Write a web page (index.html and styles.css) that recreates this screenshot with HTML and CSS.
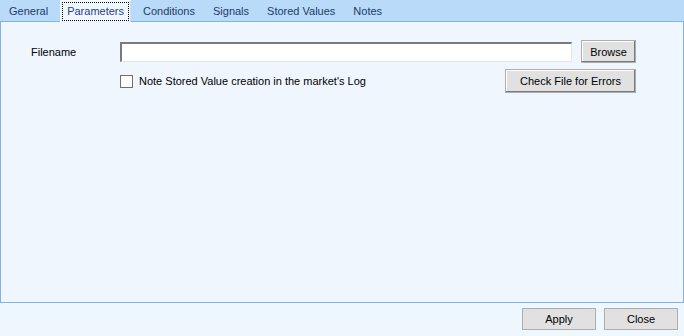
FILE: index.html
```html
<!DOCTYPE html>
<html>
<head>
<meta charset="utf-8">
<link rel="stylesheet" href="styles.css">
</head>
<body>
<div class="window">
  <div class="tabstrip">
    <div class="tab">General</div>
    <div class="tab active"><span class="focus">Parameters</span></div>
    <div class="tab">Conditions</div>
    <div class="tab">Signals</div>
    <div class="tab">Stored Values</div>
    <div class="tab">Notes</div>
  </div>
  <div class="panel">
    <div class="row1">
      <div class="label">Filename</div>
      <div class="textbox"></div>
      <div class="btn browse">Browse</div>
    </div>
    <div class="row2">
      <div class="check"><span class="box"></span><span>Note Stored Value creation in the market's Log</span></div>
      <div class="btn checkfile">Check File for Errors</div>
    </div>
  </div>
  <div class="footer">
    <div class="btn foot">Apply</div>
    <div class="btn foot">Close</div>
  </div>
</div>
</body>
</html>
```
FILE: styles.css
```css
html, body {
  margin: 0;
  padding: 0;
}
body {
  width: 684px;
  height: 336px;
  background: #eef6fe;
  font-family: "Liberation Sans", Arial, sans-serif;
  font-size: 11px;
  color: #000;
  overflow: hidden;
}
.window {
  display: flex;
  flex-direction: column;
  height: 336px;
}
.tabstrip {
  height: 21px;
  background: #b9daf8;
  display: flex;
  align-items: flex-end;
  padding-left: 3px;
  gap: 6px;
  position: relative;
  z-index: 1;
}
.tab {
  height: 20px;
  line-height: 20px;
  padding: 0 6px;
  color: #1d3a6a;
  box-sizing: border-box;
}
.tab.active {
  height: 22px;
  margin-bottom: -1px;
  background: #eff7fe;
  border: 1px solid #f6fbff;
  border-bottom: none;
  border-right-color: #c7dcf3;
  padding: 1px 1px 0;
  line-height: 17px;
  color: #2a3f8a;
}
.tab.active .focus {
  display: block;
  border: 1px dotted #000;
  padding: 0 4px;
  height: 17px;
  line-height: 17px;
}
.panel {
  height: 282px;
  box-sizing: border-box;
  border: 1px solid #7eb4ea;
  background: #eff6fe;
  padding: 18px 47px 0 30px;
}
.row1 {
  display: flex;
  align-items: center;
  height: 23px;
}
.label {
  width: 89px;
}
.textbox {
  width: 453px;
  height: 20px;
  box-sizing: border-box;
  background: #fff;
  border-top: 2px solid #7a7a7a;
  border-left: 2px solid #7a7a7a;
  border-right: 1px solid #e6e6e6;
  border-bottom: 1px solid #e6e6e6;
}
.btn {
  box-sizing: border-box;
  background: #e1e1e1;
  border: 1px solid #adadad;
  box-shadow: inset -1px -1px 0 #7a7a7a, inset 1px 1px 0 #fff;
  display: flex;
  align-items: center;
  justify-content: center;
  color: #000;
}
.browse {
  margin-left: 9px;
  width: 55px;
  height: 23px;
}
.row2 {
  display: flex;
  align-items: center;
  margin-top: 6px;
  margin-left: 89px;
  height: 24px;
}
.check {
  display: flex;
  align-items: center;
  gap: 6px;
}
.box {
  width: 13px;
  height: 13px;
  box-sizing: border-box;
  background: #fff;
  border: 1px solid #707070;
}
.checkfile {
  margin-left: auto;
  width: 131px;
  height: 24px;
}
.footer {
  display: flex;
  justify-content: flex-end;
  gap: 8px;
  padding: 5px 6px 0 0;
}
.foot {
  width: 74px;
  height: 22px;
  border-color: #adadad;
  box-shadow: none;
}
```
